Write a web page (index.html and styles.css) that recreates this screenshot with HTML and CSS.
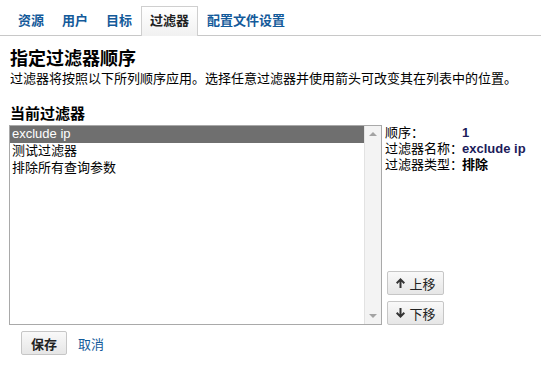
FILE: index.html
```html
<!DOCTYPE html>
<html lang="zh">

<head>
  <meta charset="UTF-8">
  <title>过滤器</title>
  <link rel="stylesheet" href="styles.css">
</head>

<body>
  <ul class="tabs">
    <li><a href="#">资源</a></li>
    <li><a href="#">用户</a></li>
    <li><a href="#">目标</a></li>
    <li class="active"><a href="#">过滤器</a></li>
    <li><a href="#">配置文件设置</a></li>
  </ul>

  <div class="main">
    <h2 class="title">指定过滤器顺序</h2>
    <p class="desc">过滤器将按照以下所列顺序应用。选择任意过滤器并使用箭头可改变其在列表中的位置。</p>
    <h3 class="sub">当前过滤器</h3>

    <div class="editor">
      <div class="listbox">
        <ul class="items">
          <li class="selected">exclude ip</li>
          <li>测试过滤器</li>
          <li>排除所有查询参数</li>
        </ul>
        <div class="scroll">
          <span class="up"></span>
          <span class="down"></span>
        </div>
      </div>

      <div class="side">
        <div class="info">
          <div class="row"><span class="label">顺序：</span><span class="val">1</span></div>
          <div class="row"><span class="label">过滤器名称：</span><span class="val">exclude ip</span></div>
          <div class="row"><span class="label">过滤器类型：</span><span class="val black">排除</span></div>
        </div>
        <div class="moves">
          <button class="btn">
            <svg width="11" height="12" viewBox="0 0 11 12"><path d="M5.5 1 L10 5.5 L8.6 6.9 L6.5 4.8 V11 H4.5 V4.8 L2.4 6.9 L1 5.5 Z" fill="#333"/></svg>
            上移
          </button>
          <button class="btn">
            <svg width="11" height="12" viewBox="0 0 11 12"><path d="M5.5 11 L10 6.5 L8.6 5.1 L6.5 7.2 V1 H4.5 V7.2 L2.4 5.1 L1 6.5 Z" fill="#333"/></svg>
            下移
          </button>
        </div>
      </div>
    </div>

    <div class="actions">
      <button class="btn save">保存</button>
      <a href="#" class="cancel">取消</a>
    </div>
  </div>
</body>

</html>
```

FILE: styles.css
```css
* {
  margin: 0;
  padding: 0;
  box-sizing: border-box;
}

body {
  font-family: "Liberation Sans", "Noto Sans CJK SC", sans-serif;
  font-size: 13px;
  color: #000;
  background: #fff;
}

li {
  list-style: none;
}

a {
  text-decoration: none;
  color: #135a9a;
}

/* 顶部标签 */
.tabs {
  display: flex;
  padding: 6px 0 0 9px;
  height: 36px;
  border-bottom: 1px solid #c8c8c8;
}

.tabs li {
  height: 30px;
}

.tabs a {
  display: block;
  padding: 0 8px;
  line-height: 28px;
  font-weight: bold;
  border: 1px solid transparent;
}

.tabs .active a {
  color: #222;
  height: 30px;
  border-color: #cfcfcf;
  border-bottom: none;
  background: linear-gradient(#fff, #f1f1f1);
}

.main {
  padding: 0 10px;
}

.title {
  font-size: 18px;
  line-height: 22px;
  margin-top: 12px;
}

.desc {
  line-height: 18px;
}

.sub {
  font-size: 15px;
  line-height: 20px;
  margin-top: 16px;
  margin-bottom: 1px;
}

/* 列表 */
.editor {
  display: flex;
  margin-left: -1px;
}

.listbox {
  display: flex;
  width: 373px;
  height: 200px;
  border: 1px solid #a9a9a9;
}

.items {
  flex: 1;
}

.items li {
  height: 17px;
  line-height: 16px;
  padding-left: 2px;
}

.items .selected {
  background: #6f6f6f;
  color: #fff;
}

.scroll {
  width: 17px;
  background: #f3f3f3;
  border-left: 1px solid #e2e2e2;
  display: flex;
  flex-direction: column;
  justify-content: space-between;
  align-items: center;
  padding: 6px 0;
}

.scroll span {
  width: 0;
  height: 0;
  border-left: 4px solid transparent;
  border-right: 4px solid transparent;
}

.scroll .up {
  border-bottom: 4px solid #a3a3a3;
}

.scroll .down {
  border-top: 4px solid #a3a3a3;
}

.side {
  flex: 1;
  display: flex;
  flex-direction: column;
  justify-content: space-between;
  padding-left: 3px;
}

.info .row {
  display: flex;
  line-height: 16px;
  white-space: nowrap;
}

.info .label {
  width: 77px;
  flex-shrink: 0;
}

.info .val {
  font-weight: bold;
  color: #1c1c5a;
}

.info .black {
  color: #000;
}

.moves {
  display: flex;
  flex-direction: column;
  gap: 6px;
  padding-left: 2px;
}

.btn {
  font-family: inherit;
  font-size: 13px;
  height: 24px;
  border: 1px solid #c6c6c6;
  border-radius: 2px;
  background: linear-gradient(#f9f9f9, #e6e6e6);
  color: #222;
  cursor: pointer;
}

.moves .btn {
  width: 57px;
  display: flex;
  align-items: center;
  justify-content: center;
  gap: 3px;
}

.actions {
  display: flex;
  align-items: center;
  margin: 6px 0 0 11px;
}

.save {
  width: 46px;
  font-weight: bold;
}

.cancel {
  margin-left: 11px;
}
```
